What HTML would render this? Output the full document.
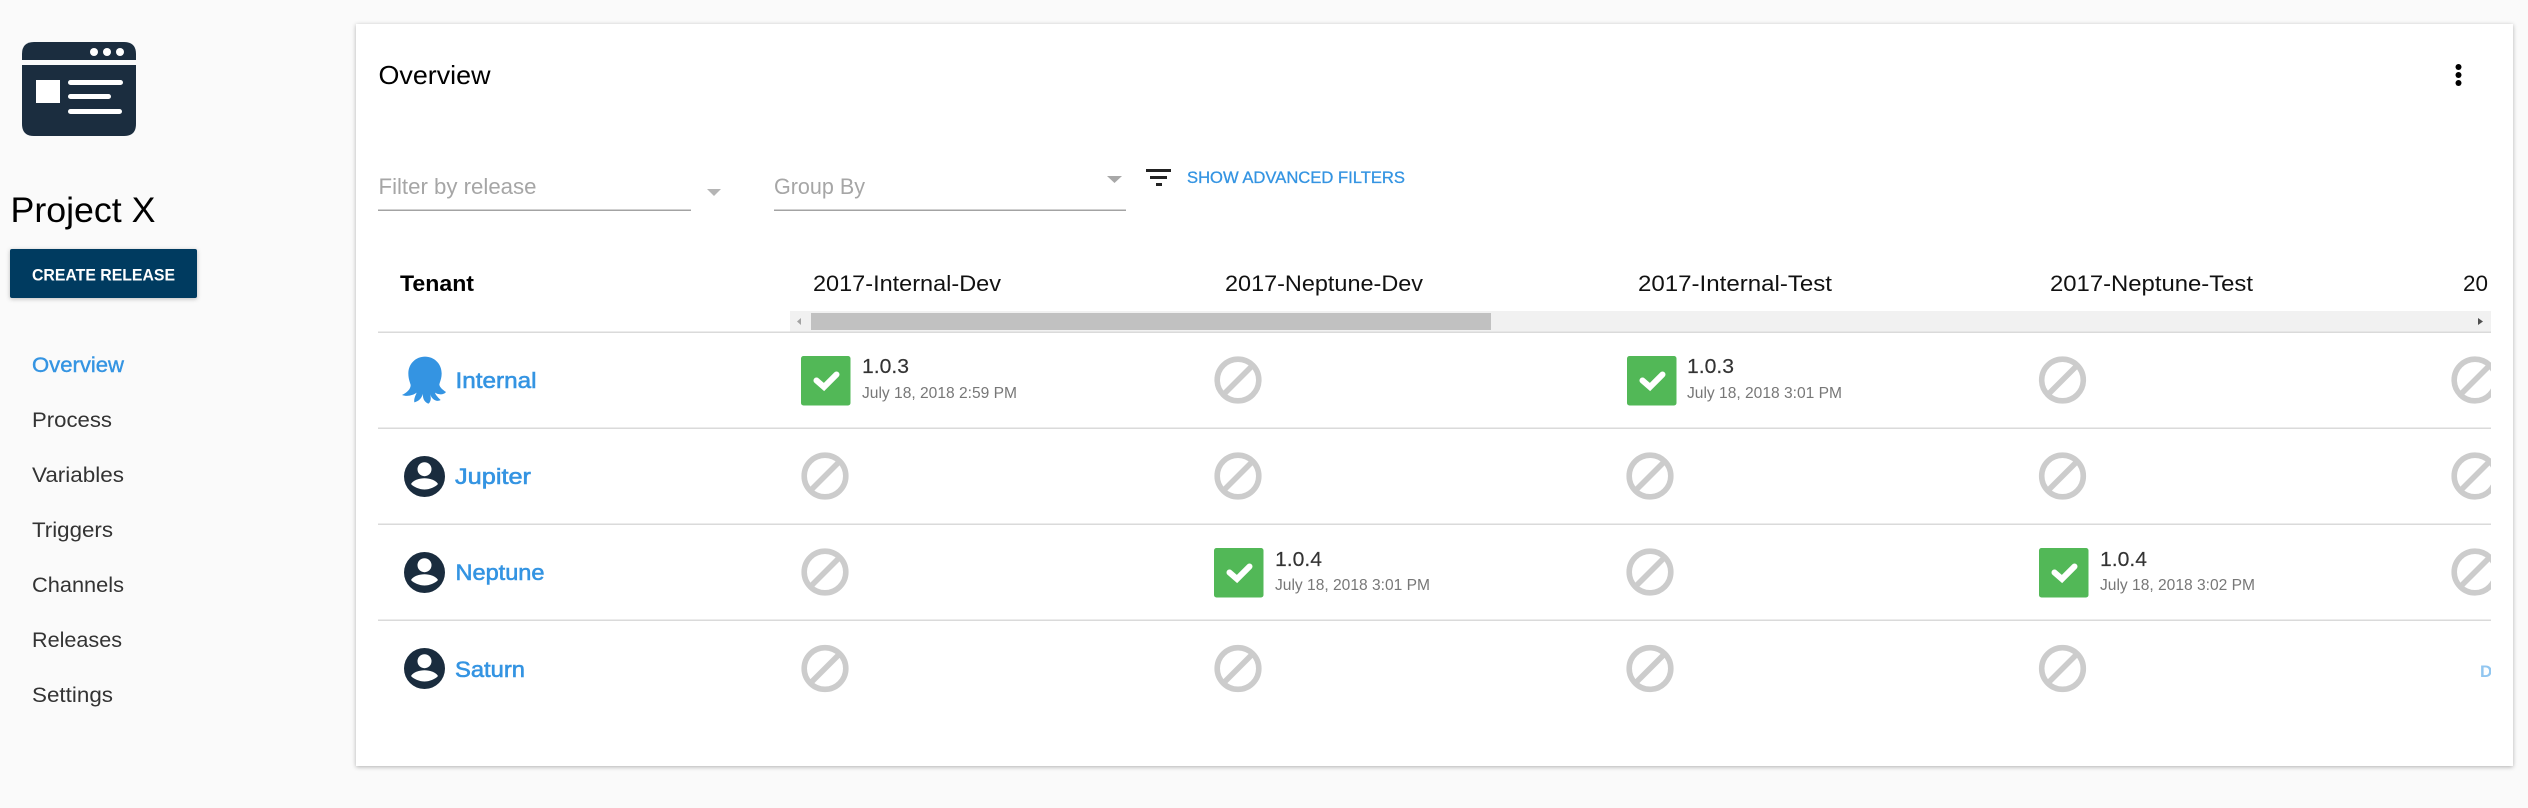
<!DOCTYPE html>
<html><head><meta charset="utf-8"><style>
html,body{margin:0;padding:0;background:#fafafa;width:2528px;height:808px;overflow:hidden}
svg{display:block;font-family:"Liberation Sans",sans-serif}
.nav{font-size:21px;fill:#333}
.t{font-size:22.500px;fill:#3494e2;stroke:#3494e2;stroke-width:.6}
.h{font-size:22px;fill:#111}
.v{font-size:20px;fill:#333;stroke:#333;stroke-width:.15}
.d{font-size:15.500px;fill:#777}
</style></head><body>
<svg width="2528" height="808" viewBox="0 0 2528 808" xmlns="http://www.w3.org/2000/svg">
<defs>
<filter id="s" x="-2%" y="-5%" width="104%" height="110%"><feDropShadow dx="0" dy="1" stdDeviation="2" flood-color="#000" flood-opacity=".3"/></filter>
<filter id="b" x="-10%" y="-20%" width="120%" height="150%"><feDropShadow dx="0" dy="1" stdDeviation="2" flood-color="#000" flood-opacity=".25"/></filter>
<clipPath id="c"><rect x="378" y="240" width="2113" height="520"/></clipPath>
<g id="no"><circle r="20.800" fill="none" stroke="#ccc" stroke-width="5.600"/><path d="M-14.500 14.500L14.500-14.500" stroke="#ccc" stroke-width="5.600"/></g>
<g id="ok"><rect width="49.500" height="49.500" rx="2.500" fill="#52b857"/><path d="M15.500 24.500L23 31 35.500 18.500" fill="none" stroke="#fff" stroke-width="6" stroke-linecap="round" stroke-linejoin="miter"/></g>
<g id="p"><circle r="20.500" fill="#1a2c3e"/><circle cy="-7.300" r="7" fill="#fff"/><path d="M-13.500 7.500C-11 3.500-5 1.800 0 1.800 5 1.800 11 3.500 13.500 7.500 11 10.500 5 13 0 13-5 13-11 10.500-13.500 7.500Z" fill="#fff"/></g>
</defs>

<!-- logo -->
<path d="M22 60V54Q22 42 34 42H124Q136 42 136 54V60Z" fill="#1b2d3f"/>
<path d="M22 65H136V124Q136 136 124 136H34Q22 136 22 124Z" fill="#1b2d3f"/>
<circle cx="94" cy="52" r="4" fill="#fff"/><circle cx="107" cy="52" r="4" fill="#fff"/><circle cx="120" cy="52" r="4" fill="#fff"/>
<rect x="36" y="80" width="24" height="23" fill="#fff"/>
<rect x="68" y="80" width="55" height="5" rx="2.500" fill="#fff"/>
<rect x="68" y="94" width="43" height="5" rx="2.500" fill="#fff"/>
<rect x="68" y="109" width="54" height="5" rx="2.500" fill="#fff"/>

<text x="10.500" y="222" font-size="35" fill="#000" textLength="145" lengthAdjust="spacingAndGlyphs">Project X</text>
<rect x="10" y="249" width="187" height="49" rx="2" fill="#053a60" filter="url(#b)"/>
<text x="32" y="280.500" font-size="17" font-weight="bold" fill="#fff" textLength="143" lengthAdjust="spacingAndGlyphs">CREATE RELEASE</text>

<text class="nav" x="32" y="372" textLength="92" lengthAdjust="spacingAndGlyphs" style="fill:#3494e2;stroke:#3494e2;stroke-width:.4">Overview</text>
<text class="nav" x="32" y="427" textLength="80" lengthAdjust="spacingAndGlyphs">Process</text>
<text class="nav" x="32" y="482" textLength="92" lengthAdjust="spacingAndGlyphs">Variables</text>
<text class="nav" x="32" y="537" textLength="81" lengthAdjust="spacingAndGlyphs">Triggers</text>
<text class="nav" x="32" y="592" textLength="92" lengthAdjust="spacingAndGlyphs">Channels</text>
<text class="nav" x="32" y="647" textLength="90" lengthAdjust="spacingAndGlyphs">Releases</text>
<text class="nav" x="32" y="702" textLength="81" lengthAdjust="spacingAndGlyphs">Settings</text>

<!-- card -->
<rect x="356" y="24" width="2157" height="742" fill="#fff" filter="url(#s)"/>
<text x="378.500" y="84" font-size="26" fill="#000" textLength="112" lengthAdjust="spacingAndGlyphs">Overview</text>
<circle cx="2458.500" cy="67" r="3" fill="#000"/><circle cx="2458.500" cy="75" r="3" fill="#000"/><circle cx="2458.500" cy="83" r="3" fill="#000"/>

<!-- filters -->
<text x="378.500" y="194" font-size="22" fill="#a6a6a6" textLength="158" lengthAdjust="spacingAndGlyphs">Filter by release</text>
<rect x="378" y="209.500" width="313" height="1.500" fill="#a3a3a3"/>
<path d="M707 189H721L714 196Z" fill="#b5b5b5"/>
<text x="774" y="194" font-size="22" fill="#a6a6a6" textLength="91" lengthAdjust="spacingAndGlyphs">Group By</text>
<rect x="774" y="209.500" width="352" height="1.500" fill="#a3a3a3"/>
<path d="M1107 176H1122L1114.500 183Z" fill="#a8a8a8"/>
<rect x="1146" y="169" width="25" height="3" fill="#222"/>
<rect x="1150" y="176" width="17" height="3" fill="#222"/>
<rect x="1156" y="183" width="6" height="3" fill="#222"/>
<text x="1187" y="183" font-size="16.500" fill="#3494e2" textLength="218" lengthAdjust="spacingAndGlyphs" style="stroke:#3494e2;stroke-width:.3">SHOW ADVANCED FILTERS</text>

<!-- table header -->
<text x="400" y="291" font-size="22" font-weight="bold" fill="#000" textLength="74" lengthAdjust="spacingAndGlyphs">Tenant</text>
<g clip-path="url(#c)">
<text class="h" x="813" y="291" textLength="188" lengthAdjust="spacingAndGlyphs">2017-Internal-Dev</text>
<text class="h" x="1225" y="291" textLength="198" lengthAdjust="spacingAndGlyphs">2017-Neptune-Dev</text>
<text class="h" x="1638" y="291" textLength="194" lengthAdjust="spacingAndGlyphs">2017-Internal-Test</text>
<text class="h" x="2050" y="291" textLength="203" lengthAdjust="spacingAndGlyphs">2017-Neptune-Test</text>
<text class="h" x="2463" y="291" textLength="25" lengthAdjust="spacingAndGlyphs">20</text>
</g>

<!-- scrollbar -->
<rect x="790" y="311" width="1701" height="21" fill="#f1f1f1"/>
<rect x="811" y="313" width="680" height="17" fill="#c1c1c1"/>
<path d="M801 318V325L797 321.500Z" fill="#a3a3a3"/>
<path d="M2478 318V325L2483 321.500Z" fill="#505050"/>

<!-- row lines -->
<rect x="378" y="331.500" width="2113" height="1.500" fill="#dadada"/>
<rect x="378" y="427.500" width="2113" height="1.500" fill="#dadada"/>
<rect x="378" y="523.500" width="2113" height="1.500" fill="#dadada"/>
<rect x="378" y="619.500" width="2113" height="1.500" fill="#dadada"/>

<!-- tenants -->
<g transform="translate(395 350) scale(.33333)"><path fill="#3494e2" d="M90 20C118 20 140 42 140 70C140 85 135 95 133 103C134 112 142 118 153 126C146 136 128 134 120 128C122 136 130 143 137 150C124 158 108 146 106 132C107 142 110 152 101 161C89 158 82 145 84 131C81 142 73 154 58 157C56 146 62 136 65 128C55 136 36 141 21 135C35 128 47 118 47 105C44 95 40 85 40 70C40 42 62 20 90 20Z"/></g>
<text class="t" x="455.500" y="388" textLength="81" lengthAdjust="spacingAndGlyphs">Internal</text>
<use href="#p" x="424.500" y="476.500"/>
<text class="t" x="455" y="484" textLength="76" lengthAdjust="spacingAndGlyphs">Jupiter</text>
<use href="#p" x="424.500" y="572.500"/>
<text class="t" x="455.500" y="580" textLength="89" lengthAdjust="spacingAndGlyphs">Neptune</text>
<use href="#p" x="424.500" y="668.500"/>
<text class="t" x="455" y="677" textLength="70" lengthAdjust="spacingAndGlyphs">Saturn</text>

<!-- cells -->
<g clip-path="url(#c)">
<use href="#ok" x="801" y="356"/>
<text class="v" x="862" y="373" textLength="47" lengthAdjust="spacingAndGlyphs">1.0.3</text>
<text class="d" x="862" y="398" textLength="155" lengthAdjust="spacingAndGlyphs">July 18, 2018 2:59 PM</text>
<use href="#no" x="1238" y="380"/>
<use href="#ok" x="1627" y="356"/>
<text class="v" x="1687" y="373" textLength="47" lengthAdjust="spacingAndGlyphs">1.0.3</text>
<text class="d" x="1687" y="398" textLength="155" lengthAdjust="spacingAndGlyphs">July 18, 2018 3:01 PM</text>
<use href="#no" x="2062.500" y="380"/>
<use href="#no" x="2475" y="380"/>

<use href="#no" x="825" y="476"/>
<use href="#no" x="1238" y="476"/>
<use href="#no" x="1650" y="476"/>
<use href="#no" x="2062.500" y="476"/>
<use href="#no" x="2475" y="476"/>

<use href="#no" x="825" y="572"/>
<use href="#ok" x="1214" y="548"/>
<text class="v" x="1275" y="566" textLength="47" lengthAdjust="spacingAndGlyphs">1.0.4</text>
<text class="d" x="1275" y="590" textLength="155" lengthAdjust="spacingAndGlyphs">July 18, 2018 3:01 PM</text>
<use href="#no" x="1650" y="572"/>
<use href="#ok" x="2039" y="548"/>
<text class="v" x="2100" y="566" textLength="47" lengthAdjust="spacingAndGlyphs">1.0.4</text>
<text class="d" x="2100" y="590" textLength="155" lengthAdjust="spacingAndGlyphs">July 18, 2018 3:02 PM</text>
<use href="#no" x="2475" y="572"/>

<use href="#no" x="825" y="668.500"/>
<use href="#no" x="1238" y="668.500"/>
<use href="#no" x="1650" y="668.500"/>
<use href="#no" x="2062.500" y="668.500"/>
<text x="2480" y="677" font-size="17" font-weight="bold" fill="#91c6f0">D</text>
</g>
</svg>
</body></html>
